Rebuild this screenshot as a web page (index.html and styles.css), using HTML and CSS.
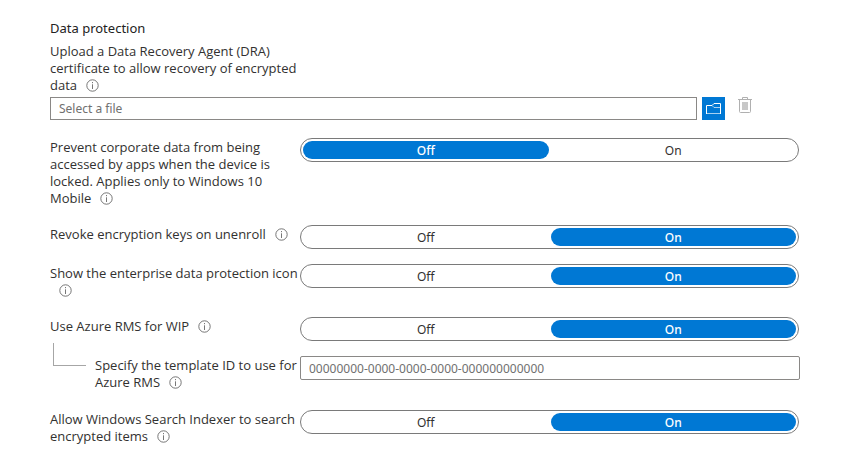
FILE: index.html
```html
<!DOCTYPE html>
<html lang="en">
<head>
<meta charset="utf-8">
<title>Data protection</title>
<link rel="stylesheet" href="styles.css">
</head>
<body>
<svg class="sprite" aria-hidden="true">
  <symbol id="info" viewBox="0 0 13 13">
    <circle cx="6.5" cy="6.5" r="5.7" fill="none" stroke="#666" stroke-width=".9"/>
    <path d="M6.5 5.3V10M6.5 3V4.2" stroke="#777" stroke-width="1" fill="none"/>
  </symbol>
</svg>
<form class="settings">
  <h1 class="title">Data protection</h1>

  <label class="label upload-label" for="file">Upload a Data Recovery Agent (DRA) certificate to allow recovery of encrypted data<svg class="info"><use href="#info"/></svg></label>
  <div class="upload">
    <input class="field upload-field" id="file" type="text" placeholder="Select a file">
    <button class="browse" type="button" aria-label="Browse">
      <svg width="15" height="12" viewBox="0 0 15 12" fill="none" stroke="#fff">
        <path d="M.5 11V2.5H6L8 .5H14.5V11"/>
        <path d="M6 2.5L8 4.5H14.5M0 10.5H15" stroke-opacity=".65"/>
      </svg>
    </button>
    <button class="remove" type="button" aria-label="Delete">
      <svg width="14" height="17" viewBox="0 0 14 17" fill="none" stroke="#b0b0b0">
        <path d="M0 2.5H14M4.5 2.5V.5H9.5V2.5"/>
        <path d="M1.5 3V14.5Q1.5 15.5 2.5 15.5H11.5Q12.5 15.5 12.5 14.5V3"/>
        <path d="M4 5H10V13H4Z" fill="#c8c8c8" stroke="none"/>
      </svg>
    </button>
  </div>

  <div class="row">
    <div class="label" id="l1">Prevent corporate data from being accessed by apps when the device is locked. Applies only to Windows 10 Mobile<svg class="info"><use href="#info"/></svg></div>
    <div class="toggle" role="radiogroup" aria-labelledby="l1">
      <label class="option"><input type="radio" name="lock" checked><span>Off</span></label>
      <label class="option"><input type="radio" name="lock"><span>On</span></label>
    </div>
  </div>

  <div class="row">
    <div class="label" id="l2">Revoke encryption keys on unenroll<svg class="info"><use href="#info"/></svg></div>
    <div class="toggle" role="radiogroup" aria-labelledby="l2">
      <label class="option"><input type="radio" name="revoke"><span>Off</span></label>
      <label class="option"><input type="radio" name="revoke" checked><span>On</span></label>
    </div>
  </div>

  <div class="row">
    <div class="label" id="l3">Show the enterprise data protection icon<svg class="info"><use href="#info"/></svg></div>
    <div class="toggle" role="radiogroup" aria-labelledby="l3">
      <label class="option"><input type="radio" name="icon"><span>Off</span></label>
      <label class="option"><input type="radio" name="icon" checked><span>On</span></label>
    </div>
  </div>

  <div class="row">
    <div class="label" id="l4">Use Azure RMS for WIP<svg class="info"><use href="#info"/></svg></div>
    <div class="toggle" role="radiogroup" aria-labelledby="l4">
      <label class="option"><input type="radio" name="rms"><span>Off</span></label>
      <label class="option"><input type="radio" name="rms" checked><span>On</span></label>
    </div>
  </div>

  <div class="row">
    <div class="nested">
      <span class="branch"></span>
      <label class="label" for="template">Specify the template ID to use for Azure RMS<svg class="info"><use href="#info"/></svg></label>
    </div>
    <input class="field template" id="template" type="text" placeholder="00000000-0000-0000-0000-000000000000">
  </div>

  <div class="row">
    <div class="label" id="l5">Allow Windows Search Indexer to search encrypted items<svg class="info"><use href="#info"/></svg></div>
    <div class="toggle" role="radiogroup" aria-labelledby="l5">
      <label class="option"><input type="radio" name="search"><span>Off</span></label>
      <label class="option"><input type="radio" name="search" checked><span>On</span></label>
    </div>
  </div>
</form>
</body>
</html>
```
FILE: styles.css
```css
* {
  box-sizing: border-box;
}

body {
  margin: 0;
  background: #fff;
  color: #323130;
  font: 12px/17px "Noto Sans", sans-serif;
}

.sprite {
  position: absolute;
  width: 0;
  height: 0;
}

.settings {
  padding: 20px 58px 0 50px;
}

.title {
  margin: 0 0 6px;
  font-size: 13px;
  line-height: 17px;
  font-weight: 400;
  color: #222;
}

.label {
  display: block;
  font-family: "Open Sans", sans-serif;
  font-size: 13px;
}

.upload-label {
  max-width: 250px;
}

.info {
  width: 13px;
  height: 13px;
  margin-left: 9px;
  vertical-align: -2px;
}

.field {
  height: 24px;
  border: 1px solid #8a8886;
  border-radius: 0;
  padding: 0 8px;
  background: #fff;
  color: #323130;
  font: inherit;
  min-width: 0;
}

.field::placeholder {
  color: #707070;
  opacity: 1;
}

.upload {
  display: flex;
  align-items: flex-start;
  margin: 3px 48px 18px 0;
}

.upload-field {
  flex: 1;
  height: 23px;
}

.browse,
.remove {
  display: flex;
  align-items: center;
  justify-content: center;
  padding: 0;
  border: 0;
  background: none;
}

.browse {
  width: 23px;
  height: 23px;
  margin-left: 5px;
  background: #0078d4;
}

.remove {
  width: 14px;
  height: 17px;
  margin-left: 13px;
}

.row {
  display: grid;
  grid-template-columns: 250px 1fr;
  align-items: start;
}

.row .label {
  padding: 1px 0 18px;
}

.toggle {
  display: grid;
  grid-template-columns: 1fr 1fr;
  gap: 2px;
  height: 24px;
  margin: 0 1px 15px 0;
  padding: 2px;
  border: 1px solid #7a7a7a;
  border-radius: 12px;
}

.option {
  position: relative;
  text-align: center;
}

.option input {
  position: absolute;
  opacity: 0;
  margin: 0;
}

.option span {
  display: block;
  height: 18px;
  border-radius: 9px;
  line-height: 20px;
}

.option input:checked + span {
  background: #0078d4;
  color: #fff;
  font-weight: 500;
}

.nested {
  display: flex;
  padding-bottom: 1px;
}

.branch {
  flex: none;
  width: 33px;
  height: 23px;
  margin: -13px 9px 0 3px;
  border: solid #a6a6a6;
  border-width: 0 0 1px 1px;
}

.template {
  width: 100%;
  border-radius: 2px;
}
```
